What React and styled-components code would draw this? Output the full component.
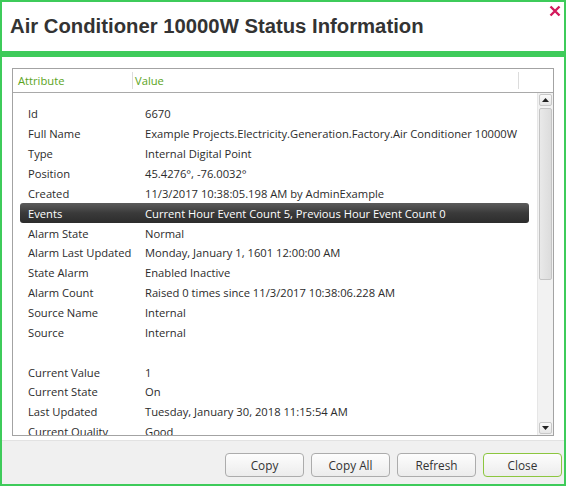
import React from "react";
import styled, { createGlobalStyle } from "styled-components";

const Global = createGlobalStyle`
  html, body { margin: 0; padding: 0; background: #fff; }
  * { box-sizing: border-box; }
`;

const Window = styled.div`
  width: 566px;
  height: 486px;
  border: 2px solid #3ecb5a;
  display: flex;
  flex-direction: column;
  background: #fff;
  font-family: "Open Sans", "Noto Sans", sans-serif;
  font-size: 11.2px;
  color: #2b2b2b;
  overflow: hidden;
`;

const TitleBar = styled.div`
  position: relative;
  height: 55px;
  flex: none;
  border-bottom: 6px solid #3ecb5a;
  display: flex;
  align-items: center;
  padding: 0 0 1px 8px;
`;

const Title = styled.h1`
  margin: 0;
  font-family: "Liberation Sans", Arial, sans-serif;
  font-weight: bold;
  font-size: 20.3px;
  color: #333;
`;

const CloseX = styled.button`
  position: absolute;
  top: 3px;
  right: 3px;
  width: 12px;
  height: 12px;
  padding: 0;
  border: 0;
  background: none;
  display: flex;
`;

const Body = styled.div`
  flex: 1;
  min-height: 0;
  padding: 11px 10px 4px 10px;
  display: flex;
`;

const ListBox = styled.div`
  flex: 1;
  min-width: 0;
  border: 1px solid #a3a3a3;
  display: flex;
  flex-direction: column;
  min-height: 0;
`;

const Header = styled.div`
  height: 24px;
  flex: none;
  display: flex;
  align-items: center;
  border-bottom: 1px solid #a9a9a9;
`;

const HeaderCell = styled.div`
  width: ${(p) => p.$w}px;
  flex: ${(p) => (p.$w ? "none" : "1")};
  height: 17px;
  display: flex;
  align-items: center;
  padding-left: ${(p) => p.$pl}px;
  color: #5ba41c;
  border-right: ${(p) => (p.$sep ? "1px solid #dcdcdc" : "none")};
`;

const Content = styled.div`
  flex: 1;
  min-height: 0;
  display: flex;
`;

const Rows = styled.div`
  flex: 1;
  min-width: 0;
  overflow: hidden;
  padding: 11px 8px 0 7px;
`;

const Row = styled.div`
  height: 19.87px;
  display: flex;
  align-items: center;
  padding-left: 8px;
  border-radius: 3px;
  white-space: nowrap;
  color: ${(p) => (p.$sel ? "#fff" : "#2b2b2b")};
  background: ${(p) =>
    p.$sel ? "linear-gradient(#5c5c5c, #3a3a3a 50%, #2c2c2c)" : "transparent"};
`;

const AttrCell = styled.div`
  width: 117px;
  flex: none;
`;

const ValueCell = styled.div`
  flex: 1;
  min-width: 0;
`;

const ScrollBar = styled.div`
  width: 16px;
  flex: none;
  background: #f2f2f2;
  border-left: 1px solid #e6e6e6;
  display: flex;
  flex-direction: column;
  padding: 1px 0 1px 0;
  gap: 2px;
`;

const ArrowButton = styled.div`
  height: 12px;
  flex: none;
  margin: 0 1px;
  border: 1px solid #c8c8c8;
  border-radius: 2px;
  background: linear-gradient(#fafafa, #e6e6e6);
  display: flex;
  align-items: center;
  justify-content: center;
`;

const Track = styled.div`
  flex: 1;
  display: flex;
  flex-direction: column;
`;

const Thumb = styled.div`
  height: 172px;
  margin: 0 1px;
  border: 1px solid #c4c4c4;
  border-radius: 2px;
  background: linear-gradient(90deg, #e9e9e9, #dcdcdc);
`;

const Footer = styled.div`
  height: 44px;
  flex: none;
  background: #f0f0f0;
  border-top: 1px solid #e2e2e2;
  display: flex;
  justify-content: flex-end;
  align-items: flex-start;
  padding: 12px 2px 0 0;
  gap: 7px;
`;

const Button = styled.button`
  width: 79px;
  height: 24px;
  border: 1px solid ${(p) => (p.$primary ? "#8cc63f" : "#acacac")};
  border-radius: 4px;
  background: linear-gradient(#fdfdfd, #ececec);
  font-family: "Open Sans", "Noto Sans", sans-serif;
  font-size: 11.8px;
  color: #333;
  padding: 0;
`;

const rows = [
  ["Id", "6670"],
  ["Full Name", "Example Projects.Electricity.Generation.Factory.Air Conditioner 10000W"],
  ["Type", "Internal Digital Point"],
  ["Position", "45.4276°, -76.0032°"],
  ["Created", "11/3/2017 10:38:05.198 AM by AdminExample"],
  ["Events", "Current Hour Event Count 5, Previous Hour Event Count 0", true],
  ["Alarm State", "Normal"],
  ["Alarm Last Updated", "Monday, January 1, 1601 12:00:00 AM"],
  ["State Alarm", "Enabled Inactive"],
  ["Alarm Count", "Raised 0 times since 11/3/2017 10:38:06.228 AM"],
  ["Source Name", "Internal"],
  ["Source", "Internal"],
  ["", ""],
  ["Current Value", "1"],
  ["Current State", "On"],
  ["Last Updated", "Tuesday, January 30, 2018 11:15:54 AM"],
  ["Current Quality", "Good"],
  ["Quality Last Updated", "Tuesday, January 30, 2018 11:15:54 AM"],
];

const Tri = ({ up }) => (
  <svg width="7" height="4" viewBox="0 0 7 4">
    <path d={up ? "M0 4 L3.5 0 L7 4 Z" : "M0 0 L3.5 4 L7 0 Z"} fill="#222" />
  </svg>
);

export default function App() {
  return (
    <>
      <Global />
      <Window>
        <TitleBar>
          <Title>Air Conditioner 10000W Status Information</Title>
          <CloseX aria-label="Close">
            <svg width="12" height="12" viewBox="0 0 12 12">
              <path d="M1.5 1.5 L10.5 10.5 M10.5 1.5 L1.5 10.5" stroke="#d3195c" strokeWidth="2.4" />
            </svg>
          </CloseX>
        </TitleBar>
        <Body>
          <ListBox>
            <Header>
              <HeaderCell $w={120} $pl={5} $sep>Attribute</HeaderCell>
              <HeaderCell $w={386} $pl={2} $sep>Value</HeaderCell>
              <HeaderCell $pl={0} />
            </Header>
            <Content>
              <Rows>
                {rows.map(([a, v, sel], i) => (
                  <Row key={i} $sel={sel}>
                    <AttrCell>{a}</AttrCell>
                    <ValueCell>{v}</ValueCell>
                  </Row>
                ))}
              </Rows>
              <ScrollBar>
                <ArrowButton><Tri up /></ArrowButton>
                <Track><Thumb /></Track>
                <ArrowButton><Tri /></ArrowButton>
              </ScrollBar>
            </Content>
          </ListBox>
        </Body>
        <Footer>
          <Button>Copy</Button>
          <Button>Copy All</Button>
          <Button>Refresh</Button>
          <Button $primary>Close</Button>
        </Footer>
      </Window>
    </>
  );
}
